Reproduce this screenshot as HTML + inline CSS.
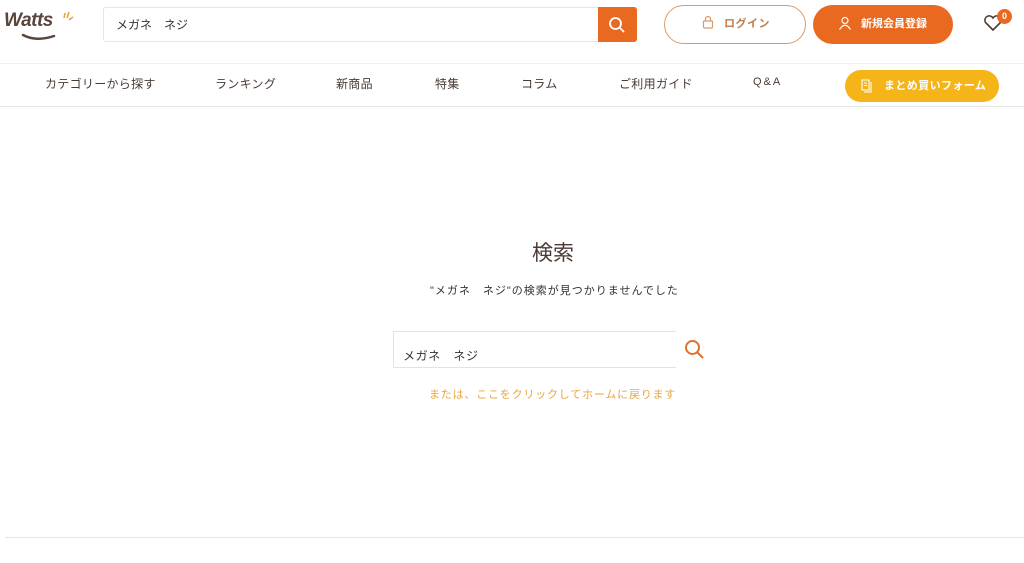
<!DOCTYPE html>
<html><head><meta charset="utf-8"><style>
*{margin:0;padding:0;box-sizing:border-box}
body{width:1024px;height:563px;background:#fff;font-family:"Liberation Sans","Noto Sans CJK JP",sans-serif;color:#4a3a33;position:relative;overflow:hidden}
.a{position:absolute}
</style></head><body>
<div class="a" style="left:4px;top:8px;width:70px;height:32px">
<div class="a" style="left:0;top:2px;font-size:19px;font-weight:bold;color:#5a463c;font-style:italic;letter-spacing:-0.5px">Watts</div>
<svg class="a" style="left:0;top:0" width="70" height="32"><path d="M19 27 Q32 34 50 28" stroke="#5a463c" stroke-width="2.5" fill="none" stroke-linecap="round"/><path d="M61 5 L60 10 M65 4 L63 10 M69 9 L65 12" stroke="#e8a03a" stroke-width="1.5"/></svg>
</div>
<div class="a" style="left:103px;top:7px;width:534px;height:35px;border:1px solid #e6e6e6;border-radius:3px"></div>
<div class="a" style="left:116px;top:16px;font-size:12px;color:#333">メガネ　ネジ</div>
<div class="a" style="left:598px;top:7px;width:39px;height:35px;background:#e8691f;border-radius:0 3px 3px 0"></div>
<svg class="a" style="left:608px;top:16px" width="18" height="18"><circle cx="7.5" cy="7.5" r="5.5" stroke="#fff" stroke-width="1.8" fill="none"/><path d="M11.5 11.5 L16 16" stroke="#fff" stroke-width="1.8"/></svg>
<div class="a" style="left:664px;top:5px;width:142px;height:39px;border:1px solid #d99a6c;border-radius:20px"></div>
<svg class="a" style="left:702px;top:15px" width="12" height="14"><rect x="1.5" y="6" width="9" height="7" rx="1" fill="none" stroke="#d99a6c" stroke-width="1.2"/><path d="M3.5 6 V4 a2.5 2.5 0 0 1 5 0 V6" fill="none" stroke="#d99a6c" stroke-width="1.2"/></svg>
<div class="a" style="left:724px;top:15px;font-size:11px;font-weight:bold;color:#c07c4c;letter-spacing:0.5px">ログイン</div>
<div class="a" style="left:813px;top:5px;width:140px;height:39px;background:#e8691f;border-radius:20px"></div>
<svg class="a" style="left:838px;top:16px" width="14" height="14"><circle cx="7" cy="4.5" r="3" fill="none" stroke="#fff" stroke-width="1.2"/><path d="M1.5 13.5 Q7 5 12.5 13.5" fill="none" stroke="#fff" stroke-width="1.2"/></svg>
<div class="a" style="left:861px;top:15px;font-size:11px;font-weight:bold;color:#fff">新規会員登録</div>
<svg class="a" style="left:983px;top:14px" width="20" height="18"><path d="M10 16 L2.5 8.5 A4 4 0 0 1 10 4 A4 4 0 0 1 17.5 8.5 Z" fill="none" stroke="#4a3a33" stroke-width="1.6"/></svg>
<div class="a" style="left:997px;top:9px;width:15px;height:15px;border-radius:50%;background:#e8691f;color:#fff;font-size:9px;font-weight:bold;text-align:center;line-height:15px">0</div>
<div class="a" style="left:0;top:63px;width:1024px;height:1px;background:#eee"></div>
<div class="a" style="left:0;top:106px;width:1024px;height:1px;background:#e6e6e6"></div>
<div class="a" style="top:75px;left:0;width:1024px;font-size:12px;color:#4a3a33;letter-spacing:0.3px">
<span class="a" style="left:45px">カテゴリーから探す</span>
<span class="a" style="left:215px">ランキング</span>
<span class="a" style="left:336px">新商品</span>
<span class="a" style="left:435px">特集</span>
<span class="a" style="left:521px">コラム</span>
<span class="a" style="left:619px">ご利用ガイド</span>
<span class="a" style="left:753px;top:1px;font-size:11px;letter-spacing:2px">Q&amp;A</span>
</div>
<div class="a" style="left:845px;top:70px;width:154px;height:32px;background:#f5b417;border-radius:16px"></div>
<svg class="a" style="left:860px;top:78px" width="14" height="15"><path d="M2 2 H9 V12 H2 Z M4 5 H7 M4 7.5 H7 M11 4 V14 H4" fill="none" stroke="#fff" stroke-width="1.1"/></svg>
<div class="a" style="left:884px;top:77px;font-size:11px;font-weight:bold;color:#fff;letter-spacing:0.4px">まとめ買いフォーム</div>
<div class="a" style="left:0;top:237px;width:1106px;text-align:center;font-size:21px;color:#4a3a33">検索</div>
<div class="a" style="left:430px;top:282px;font-size:11px;color:#333;letter-spacing:1px">"メガネ　ネジ"の検索が見つかりませんでした</div>
<div class="a" style="left:393px;top:331px;width:283px;height:37px;border:1px solid #e3e3e3;border-right:none"></div>
<div class="a" style="left:403px;top:347px;font-size:12px;color:#333;letter-spacing:0.6px">メガネ　ネジ</div>
<svg class="a" style="left:684px;top:339px" width="22" height="22"><circle cx="8.5" cy="8.5" r="6.5" stroke="#e0712b" stroke-width="2" fill="none"/><path d="M13.5 13.5 L19 19" stroke="#e0712b" stroke-width="2"/></svg>
<div class="a" style="left:429px;top:386px;font-size:11px;color:#eba63a;letter-spacing:0.8px">または、ここをクリックしてホームに戻ります</div>
<div class="a" style="left:5px;top:537px;width:1019px;height:1px;background:#e6e6e6"></div>
</body></html>
